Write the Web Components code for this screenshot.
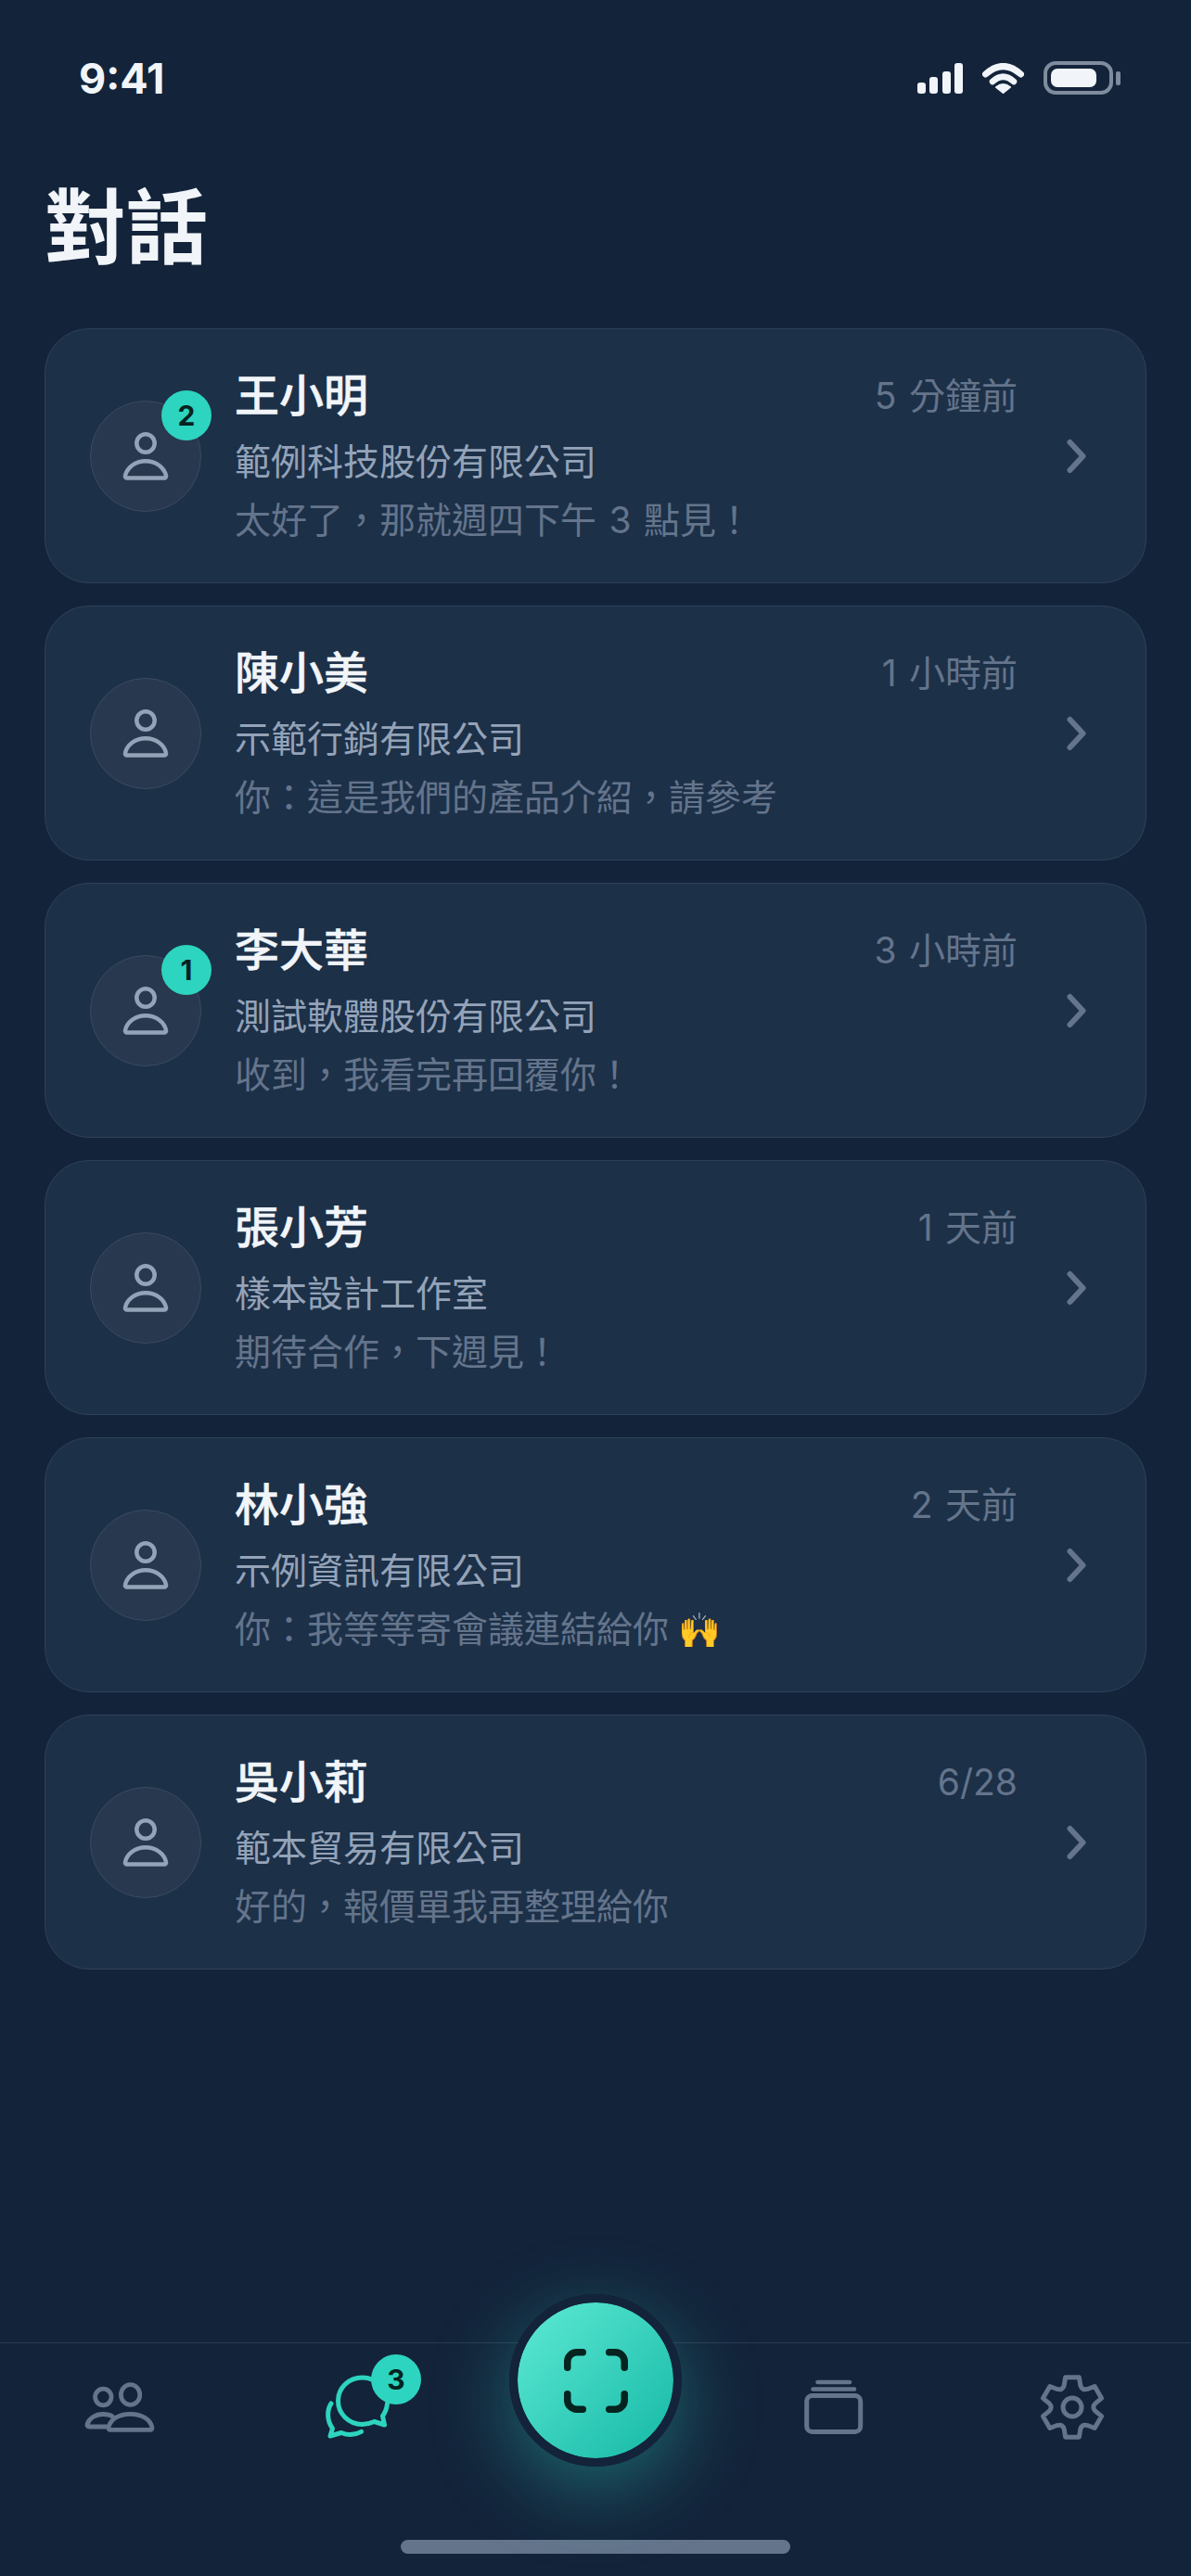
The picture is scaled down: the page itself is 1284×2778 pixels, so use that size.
<!DOCTYPE html>
<html lang="zh-Hant">
<head>
<meta charset="utf-8">
<title>對話</title>
<style>
html,body{margin:0;padding:0;background:#13233a}
body{font-family:Inter,"Noto Sans CJK TC",sans-serif;color:#f1f5f9}
</style>
</head>
<body>
<chat-screen>
  <status-bar slot="status"></status-bar>
  <h1 slot="title">對話</h1>
  <chat-card name="王小明" company="範例科技股份有限公司" preview="太好了，那就週四下午 3 點見！" time="5 分鐘前" unread="2"></chat-card>
  <chat-card name="陳小美" company="示範行銷有限公司" preview="你：這是我們的產品介紹，請參考" time="1 小時前"></chat-card>
  <chat-card name="李大華" company="測試軟體股份有限公司" preview="收到，我看完再回覆你！" time="3 小時前" unread="1"></chat-card>
  <chat-card name="張小芳" company="樣本設計工作室" preview="期待合作，下週見！" time="1 天前"></chat-card>
  <chat-card name="林小強" company="示例資訊有限公司" preview="你：我等等寄會議連結給你 🙌" time="2 天前"></chat-card>
  <chat-card name="吳小莉" company="範本貿易有限公司" preview="好的，報價單我再整理給你" time="6/28"></chat-card>
  <tab-bar slot="tabs"></tab-bar>
</chat-screen>
<script>
class ChatScreen extends HTMLElement{
  constructor(){super();this.attachShadow({mode:'open'}).innerHTML=`
  <style>
    :host{display:flex;flex-direction:column;width:1284px;height:2778px;background:#13233a;overflow:hidden}
    .title{display:block;height:186px;padding-left:48px}
    ::slotted(h1){margin:0;font:700 88px/124px "Noto Sans CJK TC",sans-serif;color:#f1f5f9;height:124px;padding-top:9px}
    .list{flex:1;display:flex;flex-direction:column;gap:24px;padding:0 48px}
  </style>
  <slot name="status"></slot>
  <div class="title"><slot name="title"></slot></div>
  <div class="list"><slot></slot></div>
  <slot name="tabs"></slot>`;}
}
class StatusBar extends HTMLElement{
  constructor(){super();this.attachShadow({mode:'open'}).innerHTML=`
  <style>
    :host{display:flex;align-items:center;justify-content:space-between;height:168px;padding:0 76px 0 85px;box-sizing:border-box;color:#f1f5f9}
    .time{font:700 45px/1 Inter,sans-serif}
    .right{display:flex;align-items:center;gap:21px}
    svg{display:block}
    .bat{display:flex;align-items:center;gap:3px}
    .shell{box-sizing:border-box;width:75px;height:36px;border:4px solid #7f8c9d;border-radius:13px;padding:4px}
    .fill{width:49px;height:20px;background:#f1f5f9;border-radius:7px}
    .cap{width:5px;height:15px;border-radius:2px;background:#7f8c9d}
  </style>
  <span class="time">9:41</span>
  <div class="right">
    <svg width="49" height="33" viewBox="0 0 49 33" fill="#f1f5f9">
      <rect x="0" y="21" width="9" height="12" rx="3"/><rect x="13" y="15" width="9" height="18" rx="3"/><rect x="27" y="9" width="9" height="24" rx="3"/><rect x="40" y="0" width="9" height="33" rx="3"/>
    </svg>
    <svg width="45" height="33" viewBox="0 0 45 33" fill="none" stroke="#f1f5f9" stroke-linecap="round">
      <path d="M3.5 12Q22.5 -5 41.5 12" stroke-width="7"/>
      <path d="M11 20Q22.5 9.500 34 20" stroke-width="6.500"/>
      <path d="M15 26Q22.500 20 30 26L22.500 32Z" fill="#f1f5f9" stroke="#f1f5f9" stroke-width="2" stroke-linejoin="round"/>
    </svg>
    <div class="bat"><div class="shell"><div class="fill"></div></div><div class="cap"></div></div>
  </div>`;}
}
class UnreadBadge extends HTMLElement{
  constructor(){super();this.attachShadow({mode:'open'}).innerHTML=`
  <style>
    :host{display:flex;align-items:center;justify-content:center;width:54px;height:54px;border-radius:50%;background:#2dd4bf;color:#05231f;font:700 30px/1 Inter,sans-serif}
  </style><slot></slot>`;}
}
class ChatCard extends HTMLElement{
  constructor(){super();
    const a=k=>this.getAttribute(k)||'';
    const pv=a('preview').replace('🙌','<span class="emo">🙌</span>');
    this.attachShadow({mode:'open'}).innerHTML=`
  <style>
    :host{display:flex;align-items:center;box-sizing:border-box;height:275px;padding:0 48px 0 48px;background:#1c3048;border:1px solid #2f415a;border-radius:48px;font-family:Inter,"Noto Sans CJK TC",sans-serif}
    .av{position:relative;flex:none;box-sizing:border-box;width:120px;height:120px;border-radius:50%;background:#28384e;border:1px solid #3a4a60;display:flex;align-items:center;justify-content:center}
    .av svg{display:block}
    unread-badge{position:absolute;top:-12px;right:-12px}
    .body{flex:1;min-width:0;margin-left:36px;padding-top:2px}
    .top{display:flex;justify-content:space-between;align-items:center;height:60px}
    .name{font-size:48px;line-height:60px;font-weight:500;color:#f1f5f9;-webkit-text-stroke:.5px #f1f5f9}
    .time{font-size:39px;line-height:60px;color:#64748b;word-spacing:2.500px}
    .co{font-size:39px;line-height:60px;color:#94a3b8;margin-top:11px}
    .pv{font-size:39px;line-height:54px;color:#64748b;margin-top:6px;white-space:nowrap;word-spacing:2.500px}
    .emo{font-size:37px;line-height:1;margin-left:-3px}
    .chev{flex:none;margin-left:30px;display:block}
  </style>
  <div class="av">
    <svg width="60" height="60" viewBox="0 0 60 60" fill="none" stroke="#94a3b8" stroke-width="4.500" stroke-linejoin="round">
      <circle cx="30" cy="16" r="9.700"/>
      <path d="M10 53.500H50a2 2 0 0 0 2-2.500C50 42 41 35.200 30 35.200S10 42 8 51a2 2 0 0 0 2 2.500Z"/>
    </svg>
    ${a('unread')?`<unread-badge>${a('unread')}</unread-badge>`:''}
  </div>
  <div class="body">
    <div class="top"><span class="name">${a('name')}</span><span class="time">${a('time')}</span></div>
    <div class="co">${a('company')}</div>
    <div class="pv">${pv}</div>
  </div>
  <svg class="chev" width="60" height="60" viewBox="0 0 60 60" fill="none" stroke="#64748b" stroke-width="6" stroke-linecap="round" stroke-linejoin="round"><path d="M26.500 15L40.500 30L26.500 45"/></svg>`;}
}
function gearPath(){
  const c=42,P=(r,d)=>{const t=d*Math.PI/180;return (c+r*Math.cos(t)).toFixed(2)+' '+(c+r*Math.sin(t)).toFixed(2)};
  let d='';
  for(let i=0;i<6;i++){
    const a=-90+i*60;
    d+=(i?'L':'M')+P(25.5,a-20)+'L'+P(33,a-13)+'L'+P(33,a+13)+'L'+P(25.5,a+20)+'Q'+P(20.5,a+30)+' '+P(25.5,a+40);
  }
  return d+'Z';
}
class TabBar extends HTMLElement{
  constructor(){super();this.attachShadow({mode:'open'}).innerHTML=`
  <style>
    :host{display:flex;flex-direction:column;position:relative;box-sizing:border-box;height:252px;border-top:1px solid #2a3a51}
    .row{display:grid;grid-template-columns:repeat(5,1fr);padding-top:27px}
    .cell{display:flex;justify-content:center;height:84px;position:relative}
    .cell svg{display:block;overflow:visible}
    unread-badge{position:absolute;left:56.800px;top:-15px}
    .ic{position:relative;width:84px;height:84px}
    .fab{position:absolute;left:549px;top:-53px;box-sizing:border-box;width:186px;height:186px;border-radius:50%;border:9px solid #13233a;background:linear-gradient(135deg,#5eead4,#14b8a6) padding-box;box-shadow:0 24px 84px rgba(45,212,191,.38);display:flex;align-items:center;justify-content:center}
    .home{margin:auto auto 24px;width:420px;height:15px;border-radius:8px;background:#64748b}
  </style>
  <div class="row">
    <div class="cell"><div class="ic"><svg width="84" height="84" viewBox="0 0 84 84" fill="none" stroke="#64748b" stroke-width="4.800" stroke-linecap="round" stroke-linejoin="round">
      <ellipse cx="54.600" cy="28.500" rx="10.200" ry="10.800"/><ellipse cx="25.300" cy="31" rx="8.700" ry="8.800"/>
      <path d="M33 66.400H76a2 2 0 0 0 2-2.500C76 55 67 49.300 54.500 49.300S33 55 31 63.900a2 2 0 0 0 2 2.500Z"/>
      <path d="M29 63H10a2 2 0 0 1-2-2.500C10 54 17 49.500 25 49.500C29 49.500 33 50.500 35.500 52"/>
    </svg></div></div>
    <div class="cell"><div class="ic"><svg width="84" height="84" viewBox="0 0 84 84" fill="none" stroke="#2dd4bf" stroke-width="5" stroke-linecap="round" stroke-linejoin="round">
      <path d="M74.500 38C74 44 72 48 69.500 51.500L71.500 61L60.500 57.500C56 59.500 52 60.500 47.500 60.500C33 60.500 21.500 49 21.500 35C21.500 21 33 10 47.500 10C55 10 62 13 67 19"/>
      <path d="M14 38C10 44 8.500 55 15.500 65L13 73L25 69.500C32 72.500 40 72 46.500 68.300"/>
    </svg><unread-badge>3</unread-badge></div></div>
    <div class="cell"></div>
    <div class="cell"><div class="ic"><svg width="84" height="84" viewBox="0 0 84 84" fill="none" stroke="#64748b" stroke-linecap="round">
      <rect x="12.700" y="29.500" width="58" height="39" rx="6" stroke-width="5"/>
      <path d="M19.500 22.500H64M24.500 15H59" stroke-width="4.600"/>
    </svg></div></div>
    <div class="cell"><div class="ic"><svg width="84" height="84" viewBox="0 0 84 84" fill="none" stroke="#64748b" stroke-width="5" stroke-linejoin="round">
      <path d="${gearPath()}"/><circle cx="42" cy="42" r="10"/>
    </svg></div></div>
  </div>
  <div class="fab"><svg width="69" height="69" viewBox="0 0 69 69" fill="none" stroke="#05231f" stroke-width="7.500" stroke-linecap="round">
    <path d="M3.750 20.250V14A10 10 0 0 1 13.750 3.750H20.250"/><path d="M48.750 3.750H55A10 10 0 0 1 65.250 14V20.250"/>
    <path d="M3.750 48.750V55A10 10 0 0 0 13.750 65.250H20.250"/><path d="M48.750 65.250H55A10 10 0 0 0 65.250 55V48.750"/>
  </svg></div>
  <div class="home"></div>`;}
}
customElements.define('chat-screen',ChatScreen);
customElements.define('status-bar',StatusBar);
customElements.define('unread-badge',UnreadBadge);
customElements.define('chat-card',ChatCard);
customElements.define('tab-bar',TabBar);
</script>
</body>
</html>
